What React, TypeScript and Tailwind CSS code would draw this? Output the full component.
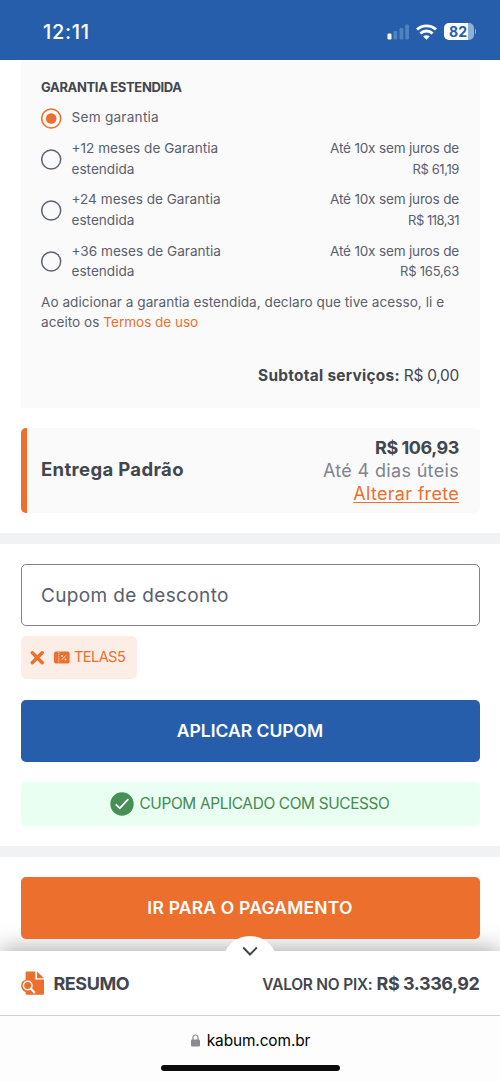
import { useState } from "react";

type Warranty = {
  id: string;
  label: string[];
  labelClass?: string;
  price?: string;
  priceClass?: string;
};

const WARRANTIES: Warranty[] = [
  { id: "none", label: ["Sem garantia"], labelClass: "tracking-[0.25px]" },
  {
    id: "12",
    label: ["+12 meses de Garantia", "estendida"],
    price: "R$ 61,19",
    priceClass: "tracking-[-0.4px]",
  },
  {
    id: "24",
    label: ["+24 meses de Garantia", "estendida"],
    price: "R$ 118,31",
    priceClass: "tracking-[-0.5px]",
  },
  {
    id: "36",
    label: ["+36 meses de Garantia", "estendida"],
    price: "R$ 165,63",
    priceClass: "tracking-[-0.2px]",
  },
];

function StatusBar() {
  return (
    <header className="flex h-[60px] shrink-0 items-center justify-between bg-[#265eab] pt-[3px] pr-[24px] pl-[43px] text-white">
      <span className="pt-px text-[20px] font-medium tracking-[0.7px]">12:11</span>
      <div className="flex items-center">
        <svg width="22" height="16" viewBox="0 0 22 16" className="mr-[7px]">
          <rect x="0.5" y="9.5" width="4" height="6" rx="1.2" fill="#fff" />
          <rect x="6.5" y="7" width="3.8" height="8.5" rx="1.2" fill="#4f83bf" />
          <rect x="12.5" y="4" width="3.8" height="11.5" rx="1.2" fill="#4f83bf" />
          <rect x="18.2" y="0.5" width="3.8" height="15" rx="1.2" fill="#4f83bf" />
        </svg>
        <svg width="21" height="16" viewBox="0 0 21 16" className="mr-[7px]" fill="none" stroke="#fff" strokeWidth="2.8">
          <path d="M1 5.6C6.2.6 14.8.6 20 5.6" />
          <path d="M4.4 9.4c3.4-3.2 8.8-3.2 12.2 0" />
          <path d="M10.5 15.8 7.2 12.5c1.9-1.7 4.7-1.7 6.6 0Z" fill="#fff" stroke="none" />
        </svg>
        <div className="flex items-center">
          <div className="flex h-[17px] w-[30px] items-center justify-center rounded-[5px] bg-[linear-gradient(90deg,#fff_81%,#8fb1d6_81%)] pr-px text-[14px] leading-none font-bold text-[#265eab]">
            82
          </div>
          <div className="ml-px h-[5px] w-[1.5px] rounded-r bg-[#8fb1d6]" />
        </div>
      </div>
    </header>
  );
}

function Radio({ checked }: { checked: boolean }) {
  return (
    <svg width="21" height="21" viewBox="0 0 21 21" className="mt-px shrink-0">
      <circle cx="10.2" cy="10.5" r="9.5" fill="none" stroke={checked ? "#ec6f2d" : "#5f6373"} strokeWidth="1.5" />
      {checked && <circle cx="10.2" cy="10.5" r="5.3" fill="#ec6f2d" />}
    </svg>
  );
}

function WarrantyCard() {
  const [selected, setSelected] = useState("none");

  return (
    <section className="mx-[20.5px] flex h-[347.5px] shrink-0 flex-col gap-[10.25px] bg-[#fafafa] px-[20.5px] pt-[16.5px] text-[13.6px] leading-[20.5px] text-[#5a5e6d]">
      <h2 className="text-[13px] font-bold tracking-[-0.34px] text-[#42464d]">GARANTIA ESTENDIDA</h2>
      {WARRANTIES.map((w) => (
        <button
          key={w.id}
          type="button"
          onClick={() => setSelected(w.id)}
          className={`flex w-full items-center text-left ${w.price ? "h-[41px]" : "h-[20.5px]"}`}
        >
          <Radio checked={selected === w.id} />
          <span className={`ml-[9.5px] flex-1 ${w.labelClass ?? ""}`}>
            {w.label.map((line) => (
              <span key={line} className="block whitespace-nowrap">
                {line}
              </span>
            ))}
          </span>
          {w.price && (
            <span className="text-right whitespace-nowrap">
              <span className="block tracking-[-0.2px]">Até 10x sem juros de</span>
              <span className={`block text-[13px] ${w.priceClass}`}>{w.price}</span>
            </span>
          )}
        </button>
      ))}
      <p className="tracking-[0.03px] whitespace-nowrap">
        Ao adicionar a garantia estendida, declaro que tive acesso, li e
        <br />
        aceito os <a className="tracking-[-0.05px] text-[#ec6f2d]">Termos de uso</a>
      </p>
      <p className="mt-[20.5px] flex items-baseline justify-end gap-1 text-[15.4px] leading-6 text-[#42464d]">
        <b className="font-bold tracking-[0.28px]">Subtotal serviços:</b>
        <span className="tracking-[-0.25px]">R$ 0,00</span>
      </p>
    </section>
  );
}

function Delivery() {
  return (
    <section className="mx-[20.5px] mt-[20.5px] flex h-[84.5px] shrink-0 items-center justify-between rounded-[5px] border-l-[6.5px] border-[#ec6f2d] bg-[#fafafa] pr-[20.5px] pl-[14.5px]">
      <span className="text-[18.5px] font-bold tracking-[0.35px] text-[#42464d]">Entrega Padrão</span>
      <div className="text-right text-[18px] leading-[23px]">
        <div className="font-bold tracking-[-0.45px] text-[#42464d]">R$ 106,93</div>
        <div className="tracking-[0.33px] text-[#7f838e]">Até 4 dias úteis</div>
        <a className="tracking-[0.3px] text-[#ec6f2d] underline underline-offset-2">Alterar frete</a>
      </div>
    </section>
  );
}

function TicketIcon() {
  return (
    <svg width="16" height="13" viewBox="0 0 16 13">
      <rect x="0" y="0.6" width="15.6" height="12" rx="2" fill="#ec6f2d" />
      <path d="M4.8 1v11.5" stroke="#fceee6" strokeWidth="0.8" strokeDasharray="1.2 0.9" />
      <path d="m7.7 8.800 4.200-4.400" stroke="#fceee6" strokeWidth="0.9" />
      <circle cx="8.1" cy="4.9" r="0.9" fill="#fceee6" />
      <circle cx="11.5" cy="8.4" r="0.9" fill="#fceee6" />
    </svg>
  );
}

function Coupon() {
  return (
    <section className="mx-[20.5px] shrink-0">
      <div className="mt-[20.5px] flex h-[61.5px] items-center rounded-[5px] border border-[#7f838e] px-[19.5px] pt-[2px] text-[19px] tracking-[0.35px] text-[#5a5e6d]">
        <span>Cupom de desconto</span>
      </div>
      <div className="mt-[10.5px] flex h-[43px] w-[116.5px] items-center rounded-[5px] bg-[#fceee6] pl-[9px] text-[#ec6f2d]">
        <svg width="15" height="15" viewBox="0 0 15 15" className="mr-[9px]">
          <path d="m2.3 2.8 9.9 9.9M12.2 2.8l-9.9 9.9" stroke="#ec6f2d" strokeWidth="3.4" strokeLinecap="round" />
        </svg>
        <TicketIcon />
        <span className="ml-[4.5px] text-[14.6px] tracking-[-0.6px]">TELAS5</span>
      </div>
      <button className="mt-[21px] flex h-[61.5px] w-full items-center justify-center rounded-[5px] bg-[#265eab] text-[17.5px] font-semibold text-white">
        <span>APLICAR CUPOM</span>
      </button>
      <div className="mt-[20.5px] flex h-[43.5px] items-center justify-center rounded-[5px] bg-[#e9fff2] text-[#45894f]">
        <svg width="24" height="24" viewBox="0 0 24 24" className="mr-[5px]">
          <circle cx="12" cy="12" r="11.7" fill="#469055" />
          <path d="m6.3 12.8 3.5 3.5 8-8.6" fill="none" stroke="#fff" strokeWidth="1.8" strokeLinecap="round" />
        </svg>
        <span className="text-[15.4px] tracking-[-0.35px]">CUPOM APLICADO COM SUCESSO</span>
      </div>
    </section>
  );
}

function SummaryIcon() {
  return (
    <svg width="24" height="24" viewBox="0 0 24 24">
      <path d="M5.6.4h8.7v8.2h8.700v14.200a1 1 0 0 1-1 1H5.600a1 1 0 0 1-1-1V1.400a1 1 0 0 1 1-1Z" fill="#ec6f2d" />
      <path d="M16 .4v6.9h7Z" fill="#ec6f2d" />
      <circle cx="6.3" cy="14.7" r="6.3" fill="#ec6f2d" />
      <circle cx="6.7" cy="14.5" r="4.3" fill="none" stroke="#fff" strokeWidth="1.5" />
      <path d="m9.9 17.8 3.3 3.5" stroke="#fff" strokeWidth="2.3" strokeLinecap="round" />
    </svg>
  );
}

function SummaryBar() {
  return (
    <div className="relative mt-[12.5px] flex h-[64.5px] shrink-0 items-center justify-between border-b border-[#d0d1d3] bg-white px-[20.5px] pt-px text-[#42464d] shadow-[0_0_26px_rgba(0,0,0,0.4)]">
      <div className="absolute -top-[15px] left-1/2 z-20 flex h-[55px] w-[55px] -translate-x-1/2 justify-center rounded-full bg-white pt-[10px]">
        <svg width="16" height="10" viewBox="0 0 16 10">
          <path d="m.7 1.5 6.8 7 6.8-7" fill="none" stroke="#42464d" strokeWidth="2" />
        </svg>
      </div>
      <div className="z-20 flex items-center gap-[9px]">
        <SummaryIcon />
        <span className="text-[18px] font-bold tracking-[-0.45px]">RESUMO</span>
      </div>
      <div className="z-20 flex items-baseline gap-1">
        <span className="text-[15.4px] font-semibold tracking-[-0.2px]">VALOR NO PIX:</span>
        <span className="text-[18px] font-bold tracking-[-0.45px]">R$ 3.336,92</span>
      </div>
    </div>
  );
}

function BrowserBar() {
  return (
    <footer className="relative flex flex-1 flex-col items-center bg-[#fdfdfd]">
      <div className="mt-[13px] flex h-6 items-center pl-px text-[15.4px] text-black">
        <svg width="9" height="13" viewBox="0 0 9 13" className="mr-[7px]">
          <rect x="0" y="5.5" width="9" height="7" rx="1.2" fill="#8a8a90" />
          <path d="M2 6V3.5a2.5 2.5 0 0 1 5 0V6" fill="none" stroke="#8a8a90" strokeWidth="1.2" />
        </svg>
        <span className="tracking-[-0.1px]">kabum.com.br</span>
      </div>
      <div className="mt-[12px] h-[6.5px] w-[179px] rounded-full bg-[#0b0b0b]" />
    </footer>
  );
}

export default function App() {
  return (
    <div className="flex h-[1082px] w-[500px] flex-col overflow-hidden bg-white font-[Inter,sans-serif]">
      <StatusBar />
      <WarrantyCard />
      <Delivery />
      <div className="mt-[20.5px] h-[10.5px] shrink-0 bg-[#f1f2f4]" />
      <Coupon />
      <div className="mt-[20.5px] h-[10.5px] shrink-0 bg-[#f1f2f4]" />
      <button className="relative z-10 mx-[20.5px] mt-[20.5px] flex h-[61.5px] shrink-0 items-center justify-center rounded-[5px] bg-[#ec6f2d] text-[17.5px] font-semibold tracking-[0.2px] text-white">
        <span>IR PARA O PAGAMENTO</span>
      </button>
      <SummaryBar />
      <BrowserBar />
    </div>
  );
}
